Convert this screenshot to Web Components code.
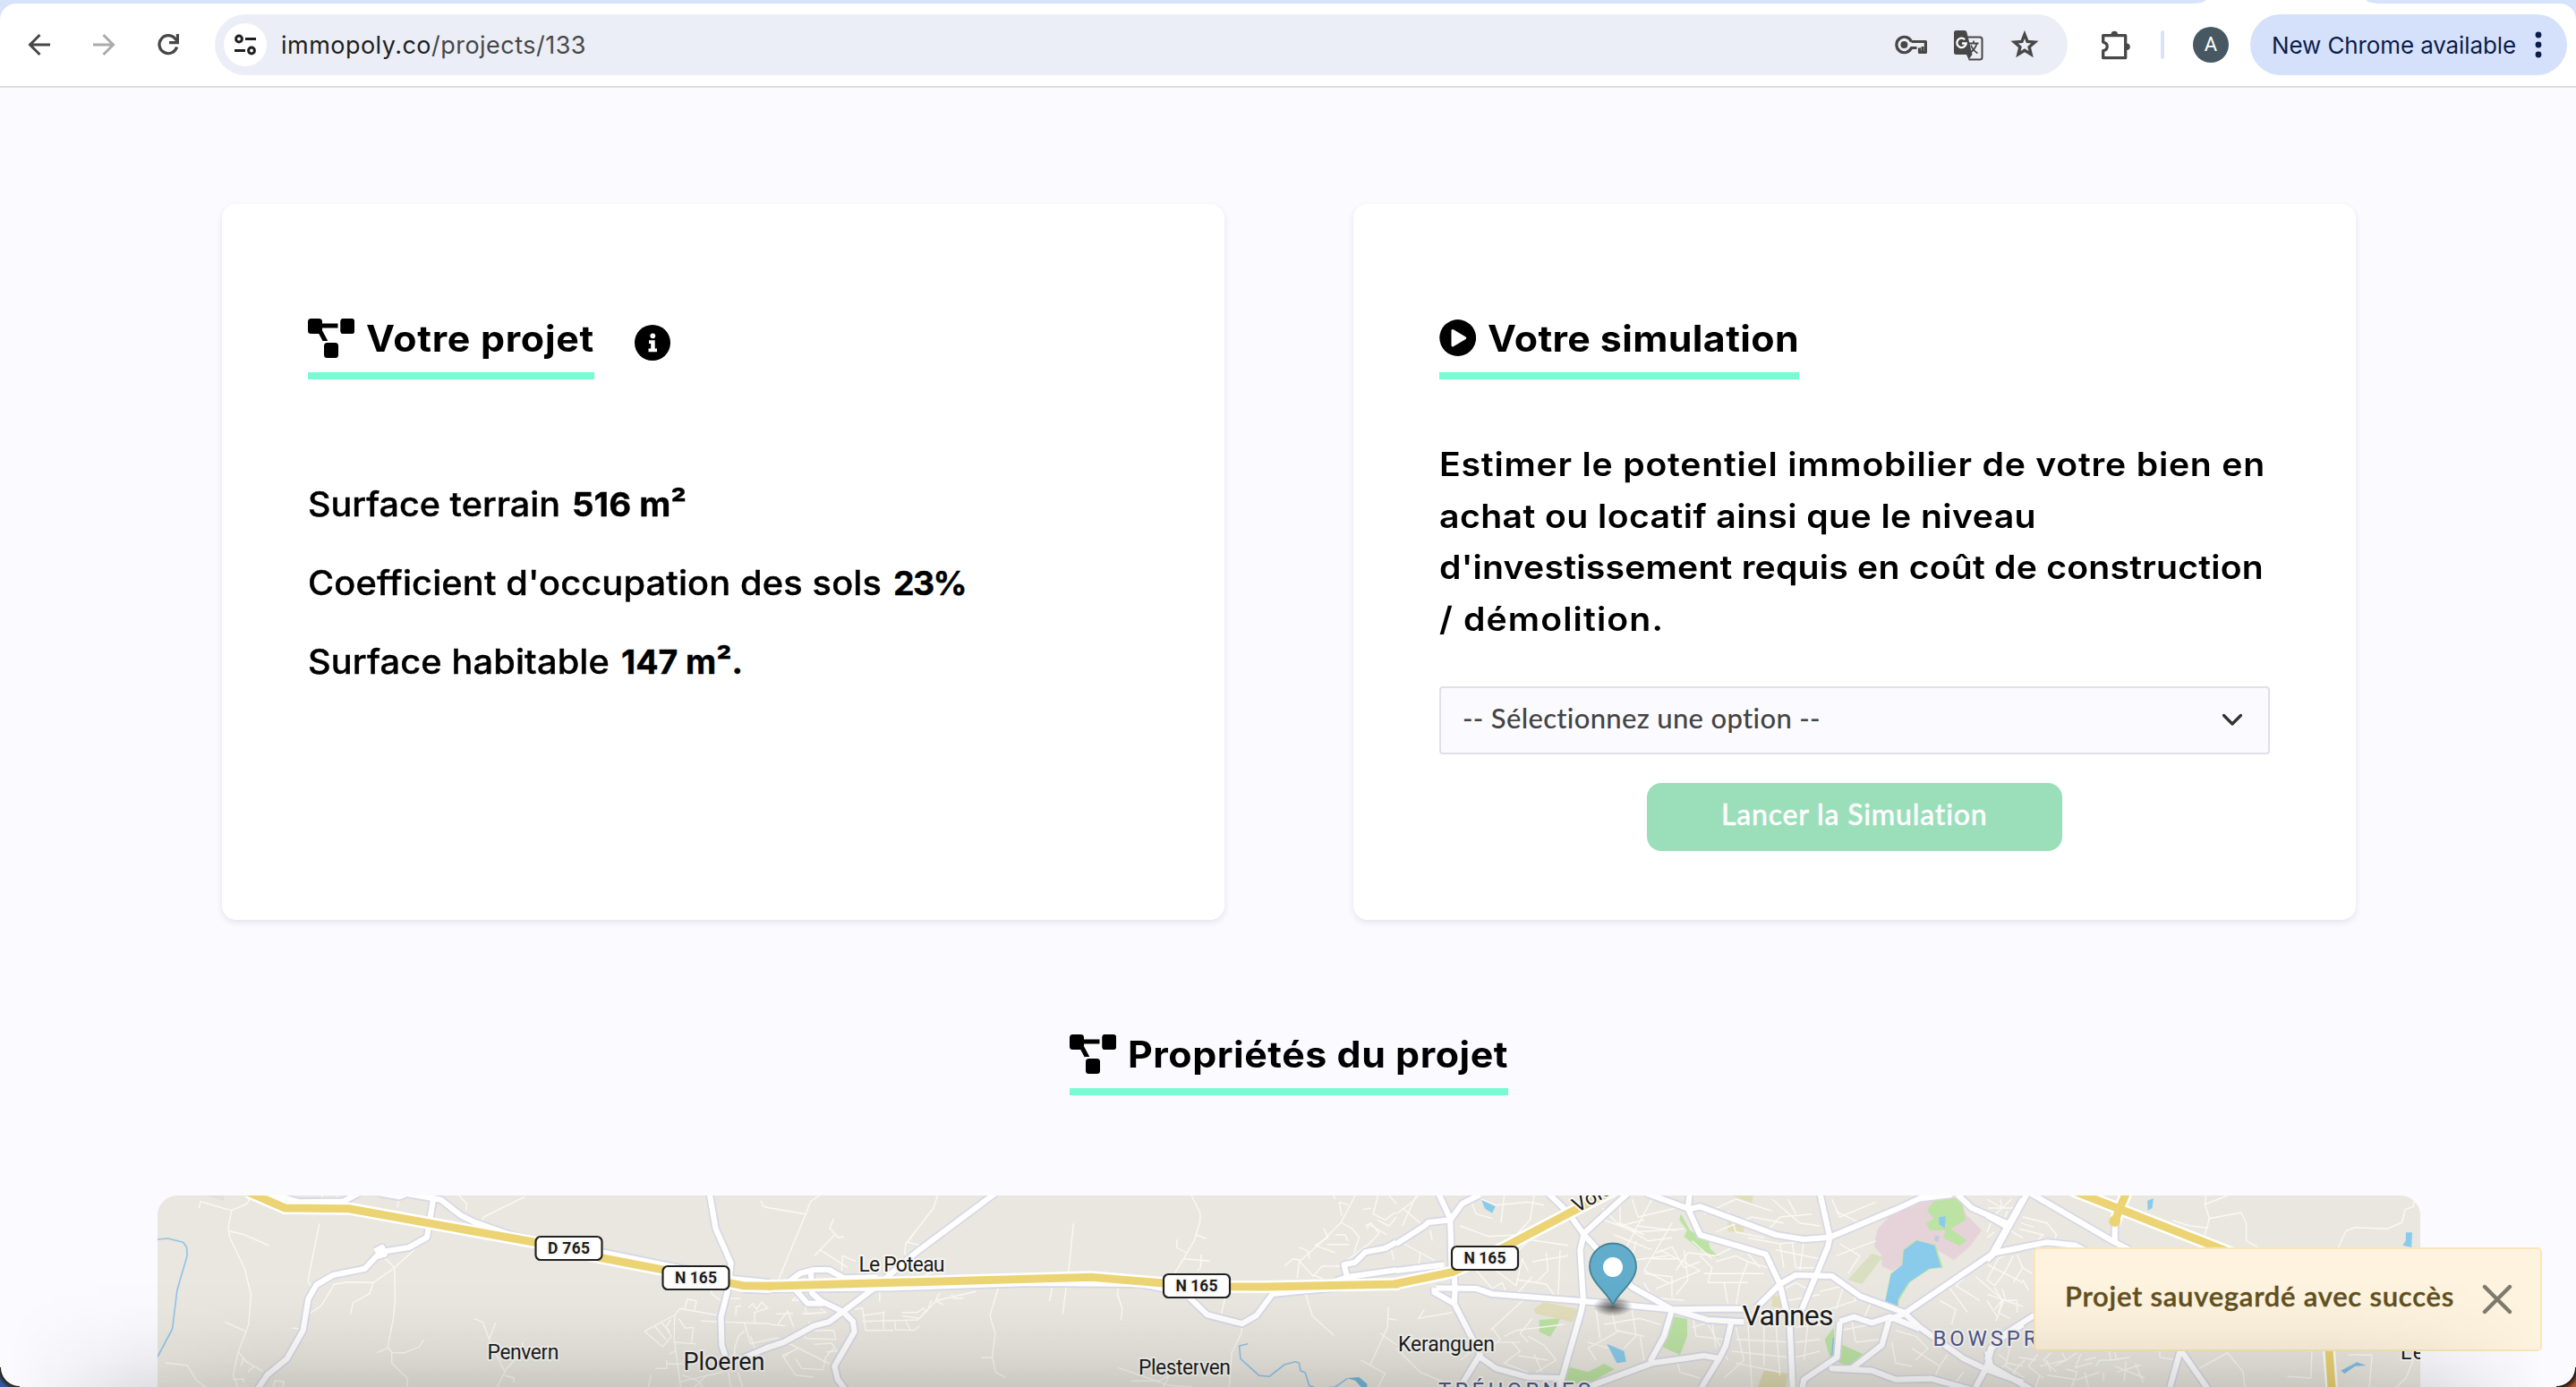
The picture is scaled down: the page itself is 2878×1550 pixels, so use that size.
<!DOCTYPE html>
<html lang="fr">
<head>
<meta charset="utf-8">
<title>Immopoly</title>
<style>
html,body{margin:0;height:100%;overflow:hidden;background:#fbfaff;font-family:Inter,"Open Sans",sans-serif;color:#000}
</style>
</head>
<body>
<app-window>
  <browser-bar slot="bar"></browser-bar>
  <project-card slot="card">
    <title-row slot="title">
      <section-title icon="diagram" w="255">Votre projet</section-title>
      <info-dot></info-dot>
    </title-row>
    <fact-list>
      <fact-line><fit-text w="282">Surface terrain</fit-text><fit-text bold w="128">516 m²</fit-text></fact-line>
      <fact-line><fit-text w="641">Coefficient d'occupation des sols</fit-text><fit-text bold w="81">23%</fit-text></fact-line>
      <fact-line><fit-text w="337">Surface habitable</fit-text><fit-text bold w="136">147 m².</fit-text></fact-line>
    </fact-list>
  </project-card>
  <project-card slot="card">
    <section-title slot="title" icon="play" w="348">Votre simulation</section-title>
    <simulation-form></simulation-form>
  </project-card>
  <section-title slot="heading" icon="diagram" w="425">Propriétés du projet</section-title>
  <city-map slot="map"></city-map>
  <toast-message slot="toast"><fit-text w="435">Projet sauvegardé avec succès</fit-text></toast-message>
</app-window>

<script>
const define = (name, html, after) => customElements.define(name, class extends HTMLElement {
  connectedCallback() {
    if (this.shadowRoot) return;
    this.attachShadow({mode: 'open'}).innerHTML = typeof html === 'function' ? html(this) : html;
    if (after) after(this);
  }
});

define('app-window', `<style>
:host{display:flex;flex-direction:column;height:1550px;position:relative;overflow:hidden;background:#fbfaff}
main{display:flex;flex-direction:column;align-items:center;flex:1;padding-top:130px;width:2880px}
.cards{display:flex;gap:144px}
.head{display:flex;margin-top:128px;margin-bottom:112px}
.toast{position:absolute;right:38px;top:1394px}
.shade{position:absolute;left:0;right:0;bottom:0;height:120px;pointer-events:none;background:linear-gradient(to top,rgba(20,20,15,.145),rgba(20,20,15,.08) 25%,rgba(20,20,15,.03) 55%,rgba(20,20,15,.008) 80%,transparent);-webkit-mask-image:linear-gradient(to right,transparent 10px,rgba(0,0,0,.7) 150px,#000 300px,#000 2600px,rgba(0,0,0,.7) 2720px,transparent 2840px)}
.corner{position:absolute;bottom:0;width:22px;height:22px}
.l{left:0;background:radial-gradient(circle at 22px 0,transparent 20.5px,#2c2213 21.5px,#2f5aa0 27px)}
.r{right:0;background:radial-gradient(circle at 0 0,transparent 20.5px,#1c1512 21.5px,#b4552f 28px)}
</style>
<slot name="bar"></slot>
<main><div class="cards"><slot name="card"></slot></div><div class="head"><slot name="heading"></slot></div><slot name="map"></slot></main>
<div class="toast"><slot name="toast"></slot></div><div class="shade"></div><div class="corner l"></div><div class="corner r"></div>`);

define('browser-bar', `<style>
:host{display:block;height:98px;box-sizing:border-box;background:#d7e2fb;border-bottom:2px solid #dcdcdf;font-family:Inter,sans-serif}
.tabs{height:4px;display:flex;justify-content:space-between;background:#fff}
.tabs i{display:block;background:#d7e2fb}
.tabs i:first-child{width:2464px;border-bottom-right-radius:16px 4px}
.tabs i:last-child{width:234px;border-bottom-left-radius:16px 4px}
.row{display:flex;align-items:center;height:92px;background:#fff;border-radius:18px 18px 0 0;box-sizing:border-box;padding:0 10px 0 28px}
svg{display:block;flex:none}
.omni{display:flex;align-items:center;box-sizing:border-box;width:2070px;height:68px;border-radius:34px;background:#ebeef6;margin-left:36px;padding:0 30px 0 10px}
.tune{width:48px;height:48px;border-radius:50%;background:#fff;margin-right:16px}
.url{font-size:27px;color:#1f1f1f;flex:1;display:flex}
.url fit-text+fit-text{color:#474747}
.sep{width:4px;height:32px;border-radius:2px;background:#d7e2fb;margin:0 32px}
.av{width:40px;height:40px;border-radius:50%;background:#475862;color:#fff;font:22px/40px Roboto,sans-serif;text-align:center;margin-right:24px;flex:none}
.upd{display:flex;align-items:center;box-sizing:border-box;width:354px;height:68px;border-radius:34px;background:#d5e1fb;padding-left:24px;color:#0b1d4b;font-size:26px;flex:none}
</style>
<div class="tabs"><i></i><i></i></div>
<div class="row">
<svg width="32" height="32" fill="none" stroke="#474747" stroke-width="3"><path d="M28 16H6M16.5 5 5.5 16l11 11"/></svg>
<svg width="32" height="32" style="margin-left:40px" fill="none" stroke="#ababab" stroke-width="3"><path d="M4 16h22M15.500 5l11 11-11 11"/></svg>
<svg width="32" height="32" style="margin-left:40px" fill="none" stroke="#474747" stroke-width="3.200"><path d="M25.600 18.500A10 10 0 1 1 23.700 9.300L26 12"/><path d="M26.400 4v9.600H17"/></svg>
<div class="omni">
 <div class="tune"><svg width="48" height="48" fill="none" stroke="#1f1f1f" stroke-width="3"><circle cx="17" cy="17.500" r="3.400"/><path d="M24 17.500h12M12 30.500h12"/><circle cx="31" cy="30.500" r="3.400"/></svg></div>
 <div class="url"><fit-text w="168">immopoly.co</fit-text><fit-text w="173">/projects/133</fit-text></div>
 <svg width="38" height="34" fill="none" stroke="#474747" stroke-width="3.200"><path d="M19.500 13.500A8.700 8.700 0 1 0 19.500 20.500H25.500M19.500 13.500H35.400V25.400H28.500V20.500" stroke-linejoin="round"/><path d="M32 19v5"/><circle cx="11.400" cy="17" r="4" fill="#474747" stroke="none"/></svg>
 <svg width="34" height="36" style="margin-left:28px"><path d="M15 9.500h15a2.500 2.500 0 0 1 2.500 2.500v20a2.500 2.500 0 0 1-2.500 2.500H17.500" fill="none" stroke="#474747" stroke-width="2"/><path d="M3.500 2h9.500a2.500 2.500 0 0 1 2.300 1.700L21.500 29l-4 5.500L15 29H3.500A2.500 2.500 0 0 1 1 26.500v-22A2.500 2.500 0 0 1 3.500 2z" fill="#474747"/><path d="M13.200 12.200a5.200 5.200 0 1 0 1.500 4.300H10" fill="none" stroke="#fff" stroke-width="2.300"/><path d="M17.500 16.500h11M23 13.500v3M26.500 16.500c-1 5-4 8-8 11M20 18.500c1.500 4 4 7 7.500 9" fill="none" stroke="#474747" stroke-width="1.800"/></svg>
 <svg width="36" height="36" style="margin-left:28px"><path fill="none" stroke="#474747" stroke-width="3.400" d="M18 6.500l3.100 7.900 8.300.7-6.300 5.400 2 8.100L18 24.200l-7.100 4.400 2-8.100-6.300-5.400 8.300-.7z"/></svg>
</div>
<svg width="36" height="36" style="margin-left:36px" fill="none" stroke="#474747" stroke-width="3.300" stroke-linejoin="round"><path d="M3.700 7.700h25v25h-25v-8q4.500-1 4.500-4.800t-4.500-4.800z"/><path d="M12.500 6.500a3.800 3.800 0 0 1 7.600 0zM30 16.500a3.800 3.800 0 0 1 0 7.600z" fill="#474747" stroke="none"/></svg>
<div class="sep"></div><div class="av">A</div>
<div class="upd"><fit-text w="273">New Chrome available</fit-text><svg width="12" height="40" style="margin-left:19px" fill="#0b1d4b"><circle cx="6" cy="9" r="3.400"/><circle cx="6" cy="20" r="3.400"/><circle cx="6" cy="31" r="3.400"/></svg></div>
</div>`);

define('project-card', `<style>
:host{display:flex;flex-direction:column;align-items:flex-start;box-sizing:border-box;width:1120px;height:800px;padding:128px 96px 0;background:#fff;border-radius:16px;box-shadow:0 3px 7px rgba(60,50,90,.11)}
</style><slot name="title"></slot><slot></slot>`);

define('title-row', `<style>:host{display:flex;align-items:flex-start;gap:45px}</style><slot></slot>`);

const icons = {
  diagram: `<svg width="52" height="44" style="margin-right:13px"><path d="M15 8h24M13 13l8 15" fill="none" stroke="#000" stroke-width="5"/><rect y="0" width="16" height="17" rx="3.500"/><rect x="36" width="16" height="17" rx="3.500"/><path d="M35 0v17" stroke="var(--gap,#fff)" stroke-width="3"/><rect x="36.500" width="15.500" height="17" rx="3.500"/><rect x="16.500" y="25" width="19" height="6" fill="var(--gap,#fff)"/><rect x="18" y="27" width="16" height="17" rx="3.500"/></svg>`,
  play: `<svg width="41" height="44" style="margin-right:13px"><circle cx="20.700" cy="21.500" r="20.400"/><path d="M13.500 13.500V30q.3 2 2.300 1.200l13.800-8.300q1.500-1.200 0-2.400L15.800 12.200q-2-.7-2.300 1.300z" fill="#fff"/></svg>`
};
define('section-title', el => `<style>
:host{display:inline-flex;align-items:flex-start;height:60px;padding-top:1px;box-sizing:content-box;border-bottom:8px solid #76fbd3;font-size:40.500px;font-weight:700;line-height:46px;margin-top:-1px}
svg{display:block;flex:none}
</style>${icons[el.getAttribute('icon')]}<fit-text stretch w="${el.getAttribute('w')}"><slot></slot></fit-text>`);

define('info-dot', `<style>:host{display:block;width:40px;height:40px;margin-top:7px}</style>
<svg width="40" height="40"><circle cx="20" cy="20" r="20"/><g fill="#fff"><circle cx="20.300" cy="12.300" r="2.900"/><path d="M16 17.200h6.700v9.300H25v3.700H15.500v-3.700h2.700v-5.600H16z"/></g></svg>`);

define('fact-list', `<style>:host{display:flex;flex-direction:column;gap:30px;margin-top:111px}</style><slot></slot>`);
define('fact-line', `<style>:host{display:flex;gap:13px;font-size:37.500px;font-weight:500;line-height:58px;-webkit-text-stroke:.4px #000}::slotted([bold]){font-weight:700}</style><slot></slot>`);

define('simulation-form', `<style>
:host{display:flex;flex-direction:column;align-items:center;width:928px}
p{margin:66px 0 47px;width:100%;display:flex;flex-direction:column;font-size:37px;font-weight:600;line-height:57.500px}
.sel{display:flex;align-items:center;justify-content:space-between;box-sizing:border-box;width:928px;height:76px;padding:0 27px 0 24px;border:2px solid #dfe0e8;border-radius:4px;background:#fbfaff;color:#444;font:500 31px Lato,sans-serif}
.sel fit-text{margin-bottom:7px}
.btn{display:flex;align-items:center;justify-content:center;box-sizing:border-box;width:464px;height:76px;margin-top:32px;padding-bottom:8px;border-radius:16px;background:#9bdeba;color:#fff;font:500 32px Lato,sans-serif;-webkit-text-stroke:.4px #fff}
</style>
<p><fit-text stretch w="923">Estimer le potentiel immobilier de votre bien en</fit-text><fit-text stretch w="667">achat ou locatif ainsi que le niveau</fit-text><fit-text stretch w="921">d'investissement requis en coût de construction</fit-text><fit-text stretch w="251">/ démolition.</fit-text></p>
<div class="sel"><fit-text w="401">-- Sélectionnez une option --</fit-text><svg width="26" height="20" fill="none" stroke="#333" stroke-width="3.200" stroke-linecap="round" stroke-linejoin="round"><path d="M3.500 4.500l9.500 9.500 9.500-9.500"/></svg></div>
<div class="btn"><fit-text w="298">Lancer la Simulation</fit-text></div>`);

define('toast-message', `<style>
:host{display:flex;align-items:center;justify-content:space-between;box-sizing:border-box;width:568px;height:116px;padding:0 30px 0 33px;border:2px solid #fce6b9;border-radius:5px;background:#fdf3de;color:#62501f;font:600 31px Lato,sans-serif;-webkit-text-stroke:.4px #62501f}
::slotted(fit-text){margin-bottom:9px}
</style><slot></slot><svg width="36" height="36" fill="none" stroke="#7e7a6c" stroke-width="4.400" stroke-linecap="round"><path d="M4 4l28 28M32 4L4 32"/></svg>`);

/* Map geometry: each tile keeps its own coordinate system [origin x, x scale]; y is shared (thirds of a pixel). */
const tiles = {A: [-16, 2.24], B: [684, 2.24], C: [1384, 2.24], D: [2044, 2.383]};
const pts = (t, s) => s.trim().split(/\s+/).map(p => {
  const [x, y] = p.split(',').map(Number);
  return (tiles[t][0] + x / tiles[t][1]).toFixed(1) + ',' + (y / 3 - 16).toFixed(1);
}).join(' ');
const minor = {
A: `143,68 221,98 260,75 270,50|143,68 140,90|221,98 213,155 217,190 254,293 270,380 264,480 238,572 225,650 240,700|217,168 250,178 315,216|441,142 412,335 420,352|205,472 256,503|372,492 392,496|680,228 629,290 603,255|629,290 630,400 626,460 612,555 622,575 622,610 661,660 661,700|629,290 576,340 510,338 478,346 445,418 418,442|576,340 566,377 525,408 519,445|584,575 612,560|622,575 655,575 690,556 702,532|55,609 110,617 135,670 158,692|238,572 258,605 300,637|245,620 250,595|262,640 278,620|225,664 252,664 250,675|325,690 330,668 353,672 345,700|828,460 850,473 866,530 905,640 885,690|882,474 866,530|950,540 948,575 905,635|905,652 928,660 927,675|790,48 809,75 808,98|955,52 852,120 845,138|448,48 448,65|486,48 484,62|640,60 636,88|1545,65 1552,85 1568,90|1421,365 1423,378 1450,405|1354,432 1362,395 1384,402 1380,432|1343,427 1440,450|1343,427 1330,450 1328,540|1328,450 1255,503 1300,555 1322,520 1308,490 1320,465|1340,460 1357,493 1377,490 1372,545|1280,485 1308,530|1295,470 1318,505|1395,469 1568,478|1328,540 1383,545|1483,450 1484,420 1497,418|1515,425 1525,410 1535,430 1548,405 1562,425|1530,475 1530,440 1565,425|1505,478 1520,545 1568,530|1505,500 1490,520 1480,560 1480,600|1330,540 1345,690|1316,580 1335,567|1310,613 1350,613|1282,628 1310,628 1310,600|1271,650 1265,690|1345,672 1450,640|1380,690 1410,650|1465,640 1470,690|1520,520 1530,560 1568,550|1468,393 1495,393|1488,640 1500,690|1350,650 1390,670 1400,690`,
B: `0,90 90,110 22,330|90,110 102,68 125,48|160,126 150,158 172,190 186,186|162,180 112,250|126,230 195,290|180,300 182,250 215,268|420,48 410,90 340,210 338,240 345,262|365,168 345,205 380,216|440,290 385,318|760,142 748,303|572,358 551,450 564,510 557,590 565,640 590,658|530,591 557,592|742,352 733,447|707,354 700,402|873,352 870,378 882,428 879,466|1055,48 1077,105 1077,135 1062,200 1040,250 1013,310|1067,180 1092,192|1020,195 1018,222 1042,240|1036,260 1102,268|1080,245 1078,290 1070,300|1182,485 1180,510 1156,575 1150,690|1140,390 1130,445|1322,370 1342,382 1358,452 1412,517|1548,422 1546,490 1502,618|1528,510 1568,548|1480,600 1540,645 1522,690|1546,460 1568,465|872,625 1000,685 1060,690|1000,650 985,690|905,670 975,670 1030,625|1465,48 1430,138 1380,205 1325,270 1320,325|1410,48 1415,60|1430,138 1458,160 1475,188 1462,240|1448,80 1425,70 1432,115|1385,158 1398,188 1365,215 1415,240|1415,180 1440,180 1447,200|1395,212 1450,212|1522,48 1510,110 1540,130 1565,105|1485,95 1505,90|1490,150 1505,140 1525,175 1500,210 1440,270|1550,48 1568,75|1495,160 1500,145 1545,180|1520,130 1550,150 1568,120|1288,285 1310,260 1328,265|1325,222 1345,232 1352,260|1325,268 1360,318 1382,285 1432,285|1362,315 1385,328|1556,230 1562,265|232,470 370,465 418,400 516,370|213,430 232,425 240,500 310,500|285,435 285,500|313,470 315,498 362,500 375,485|330,440 370,440 385,425 390,435 375,460 332,452|340,468 352,498|232,450 288,440|405,400 392,440|425,375 415,400 435,415|455,378 460,392 485,392|250,370 275,370 275,405|55,400 72,400 68,385 55,400|88,415 92,445 130,442|80,445 140,440 120,418|15,445 58,443|20,480 45,435 60,490|0,480 40,485|0,530 22,525|32,550 58,520|42,540 150,612|72,560 32,585 65,650 110,657|65,595 80,628 133,632 140,590 160,560|78,500 160,500 165,530 90,527 80,490|112,547 155,543 168,570 142,572|98,470 105,500|36,590 55,570`,
C: `15,150 50,48|15,90 60,140|0,110 40,70 55,48|190,48 250,80 330,70 370,80|160,150 230,185 300,180 335,130 345,48|185,60 200,110 240,125|270,48 262,140|20,210 60,240 55,290|60,240 95,265|85,165 90,200|300,190 430,215|330,200 300,240 260,270|385,130 330,180|250,300 300,350 315,260 330,300|300,330 375,345 400,390|200,300 240,360 265,340 280,390|375,240 380,300 350,340|410,230 405,390|340,270 430,250|300,380 340,320|235,500 320,395|70,430 55,460 140,440|160,600 220,540 310,540|270,520 300,500 420,480|240,490 260,530 235,560|290,540 310,570 270,610 330,640|330,520 370,550 400,600 350,640|305,585 380,600|0,560 60,640 130,680|30,520 80,560|340,460 310,510 330,540|345,580 365,640|500,120 600,170 720,160|515,90 560,150 620,130|590,60 605,120 700,90|560,60 560,140 620,180|640,60 560,260|600,150 700,165|555,140 630,200 690,190|545,180 640,230|600,200 580,310|650,240 690,220 720,290 760,270|560,270 680,250|690,140 620,300 680,340|660,230 760,300 650,360|700,300 730,240 800,250|620,310 690,320 690,390|720,230 730,330 700,380|760,250 790,290 780,340 880,340|800,270 850,250 880,270 860,340|770,310 920,310|800,250 860,210 910,290|820,340 830,410|860,340 850,420|880,270 930,290|620,340 640,390 720,400|740,200 790,260|700,260 640,260|770,110 850,60 940,100|830,100 850,170 920,190|800,170 890,120 970,140|920,180 960,120 1040,110|940,60 1010,140 1060,150|980,60 1000,110|880,190 960,210 1030,200|960,210 970,290|950,230 1060,260|990,200 1000,290 1060,290|1020,200 1010,300|1090,60 1110,120 1200,70|1100,100 1160,140 1150,160|1110,210 1160,250 1130,310|1100,250 1200,200|1060,370 1120,350 1100,430|1130,350 1150,400 1080,430|1190,400 1170,460|960,370 1000,340 1040,370|980,400 1060,380|500,430 510,530|540,440 550,500 620,520|590,430 600,520 570,560|520,480 610,460 660,480|560,500 480,560 500,600|610,520 620,600|480,540 530,560|740,430 750,520 820,530|700,590 710,640 760,660|740,490 790,470 800,560|760,430 830,600|850,490 870,600 820,660|880,480 890,690|850,530 990,540|840,570 980,590|920,480 920,620|950,480 960,650|850,610 960,640|1000,490 1080,480|1000,540 1060,530|1000,590 1060,570|1030,480 1020,600|1110,500 1190,480|1140,470 1150,540 1210,530|1250,500 1300,520 1330,560 1300,600|1240,540 1250,610 1290,620|1290,560 1360,620 1350,650|1380,580 1360,620|1420,640 1390,690|1440,300 1400,350 1460,400|1380,350 1430,440|1480,280 1568,340|1450,320 1520,400 1500,470|1360,400 1400,430 1390,480|1480,380 1568,420|1500,640 1530,610 1568,620|1480,90 1568,90|1500,110 1540,60|1530,160 1568,190|1530,100 1520,130`,
D: `95,120 160,140 185,180 180,195|85,160 150,180 120,215|90,140 125,155|0,60 40,90 35,60|10,140 0,170|20,170 0,190|60,240 30,260 0,330 20,350 45,310 70,250|80,245 95,290 120,310|95,290 70,340|20,355 40,400 30,440 60,460|40,360 50,400 80,400 80,440|40,400 20,430|95,330 110,365|0,400 30,460|583,48 580,78 592,125 676,105 690,140 690,200 720,220|592,125 578,190|495,132 540,150 588,157|580,78 640,48|1138,62 1135,85 1113,95 1105,138 1065,160 980,155 955,168 935,222|865,570 862,660 800,655|565,628 640,575 682,640 686,690|962,582 1025,583 1018,690|1135,600 1115,660 1090,690|460,570 460,590 495,598|135,580 110,620 150,660|170,575 150,600 185,640|200,575 210,600 180,620|85,590 130,600|60,560 50,620 100,660|140,620 210,600 240,575|250,580 235,625 280,610|210,630 240,640 225,690|260,600 290,590|160,650 240,665 300,640|290,620 300,600 330,600 325,570|340,575 345,600|340,620 420,660|345,640 410,615|370,605 365,670|395,610 415,675|310,640 310,670|330,600 380,590|260,640 270,690|160,600 170,640|100,600 70,640 90,690|50,600 30,580|130,690 140,650`
};
const major = {
A: `310,40 390,70 500,68 540,40|590,40 640,52 660,42 745,62 795,115 830,138 930,185 1100,225 1320,285 1480,328 1568,340|727,50 710,188 665,222 593,238 555,293 475,315 433,348 413,395 400,500 360,595 310,650 285,700|580,235 598,222 604,245 585,252|1417,40 1433,160 1471,275 1462,370 1446,455 1448,550 1460,600|1488,600 1568,555|1500,362 1568,366`,
B: `565,40 365,240 290,325|260,360 183,437 148,472 110,485 35,540 -10,560|183,437 208,470 212,505 162,620 170,665 190,700|183,437 130,403 105,375 103,300|50,335 75,310 110,297 148,297 185,325 270,322|65,365 95,410 135,410|0,362 300,358 650,342 930,345 985,360|1050,390 1095,448 1182,478 1218,450 1258,378 1330,368 1568,340|1415,335 1450,320 1568,298|1445,320 1437,280 1465,272 1490,238 1540,225 1568,205`,
C: `0,210 70,150 80,138 135,130 165,75 210,45|105,40 135,125|135,130 138,290|0,300 120,280|145,310 147,365 145,410|100,358 200,360 240,378 465,402 690,430 790,428 870,428|95,358 95,372 145,410 210,580 160,690|210,590 250,628 330,657 410,660|380,40 430,105 470,180 590,355 690,430 780,465 870,472|580,40 470,175 460,230 468,400 462,440 408,690|625,40 730,92 760,180 925,245 960,345|735,30 730,90|730,95 760,85 950,180 1020,195 1085,188 1250,95 1310,58 1390,45|1060,40 1085,188 1080,220 1015,430|900,425 960,345 1000,315 1090,318 1160,385 1270,440 1310,490 1420,595 1475,630 1568,675|1568,60 1490,245 1270,445 1230,465|960,345 985,490 992,700|1110,470 1145,455 1190,475 1235,455 1310,495|1110,470 1103,590 1020,665 1015,700|1232,470 1215,550 1140,628 1090,628 1190,635 1250,665 1340,662 1440,700|690,430 670,520 635,605|838,475 825,550 810,590 760,700|480,690 640,610 770,585 810,595|1475,635 1490,560 1520,520 1568,480|1475,630 1450,690|1405,45 1440,90 1535,145|1500,240 1568,222`,
D: `105,45 20,240 0,265|0,115 50,150|20,240 160,205 235,215 265,235|115,40 340,205 380,230|340,140 340,210|0,570 10,620 120,700|0,600 10,560 50,510 125,450|485,700 515,565 590,700`
};
const yellow = {
A: `262,36 355,90 515,92 980,205 1150,258 1320,302 1500,350 1575,352`,
B: `-5,352 805,322 985,342 1150,353 1240,354 1575,345`,
C: `-5,345 140,305 230,250 435,105 560,20`,
D: `225,30 660,245|372,36 350,100 340,140|910,560 918,700`
};
const areas = [
 ['C','#e6d3da','1205,160 1250,95 1310,65 1410,52 1425,110 1465,165 1435,220 1395,265 1340,220 1270,280 1240,300 1215,285 1215,250 1195,215'],
 ['C','#bde3a4','1345,65 1380,50 1415,65 1425,130 1388,160 1428,198 1410,218 1368,190 1375,165 1335,165 1325,140 1345,125 1328,100'],
 ['C','#bde3a4','712,108 735,165 782,200 785,225 810,258 760,230 720,185 728,165 708,130'],
 ['C','#bde3a4','690,452 728,462 728,520 710,582 665,555'],
 ['C','#bde3a4','358,465 410,460 400,490 385,522 358,505'],
 ['C','#bde3a4','425,620 480,640 520,612 546,630 480,680 420,675'],
 ['C','#bde3a4','1110,545 1168,580 1130,620 1095,600'],['C','#bde3a4','1095,490 1072,530 1085,590 1098,590'],
 ['C','#e3deba','370,405 455,430 440,472 350,445 343,430'],['C','#e3deba','940,380 965,390 965,425 940,420'],
 ['C','#e3deba','830,125 870,140 870,172 830,168'],['C','#e3deba','840,48 893,48 890,75'],['C','#d9dfc0','1190,242 1217,255 1165,345 1130,330'],
 ['C','#dfd9b0','920,635 980,645 975,690 905,690'],
 ['C','#bde3a4','1300,197 1350,213 1368,290 1335,295 1285,340 1258,400 1255,430 1222,410 1237,310 1265,282 1268,230'],
 ['C','#8acbec','1303,199 1347,215 1363,288 1333,293 1282,340 1255,395 1255,425 1223,408 1238,312 1267,280 1270,232'],
 ['C','#8acbec','213,62 248,85 240,107 222,92'],['C','#8acbec','527,545 570,570 575,605 552,610'],['C','#8acbec','1358,120 1375,118 1373,158 1358,145'],
 ['C','#c4c9db','1348,182 1360,185 1355,203 1346,198'],
 ['B','#76b6da','1443,660 1475,657 1495,680 1495,700 1480,690 1465,668'],
 ['D','#8acbec','427,65 443,58 440,90 428,98'],['D','#8acbec','1115,172 1132,172 1130,222 1107,215 1115,198'],
 ['D','#7fc0e6','942,635 985,607 1010,618 980,620 952,645'],
 ['A','#e2e0d9','155,48 202,48 202,66']
];
const rivers = [['A','20,197 62,192 100,205 109,222 110,250 85,365 73,495 36,588'],['B','1197,545 1175,552 1178,595 1225,652 1250,655 1288,615 1315,605 1325,610 1328,635 1340,642 1350,685 1370,695 1415,690 1445,662'],['C','1094,525 1090,590'],['C','1042,642 1085,600']];
const lines = (set, style) => Object.entries(set).map(([t, s]) => s.split('|').map(l => `<polyline points="${pts(t, l)}" ${style}/>`).join('')).join('');
const label = (x, y, w, size, s, extra = '') => `<text x="${x - 176}" y="${y - 1336}" textLength="${w}" font-size="${size}" ${extra}>${s}</text>`;
const shield = (x, y, s) => `<g transform="translate(${x - 176} ${y - 1336})"><rect x="1" y="1" width="74" height="26" rx="5.500" fill="#fff" stroke="#222" stroke-width="2.200"/><text x="14.500" y="20" textLength="47" font-size="17.500" font-weight="700" stroke="none">${s}</text></g>`;

define('city-map', () => `<style>
:host{display:block;width:2528px;height:214px;border-radius:22px 22px 0 0;overflow:hidden;background:#e9e7df}
svg{display:block}
polyline{fill:none;stroke-linejoin:round}
text{font-family:Roboto,sans-serif;fill:#1c1c1c;stroke:#f7f6f2;stroke-width:4px;paint-order:stroke;stroke-linejoin:round}
text.area{fill:#50588a}
</style>
<svg width="2528" height="214" viewBox="0 0 2528 214">
${areas.map(([t, c, s]) => `<polygon fill="${c}" points="${pts(t, s)}"/>`).join('')}
${rivers.map(([t, s]) => `<polyline points="${pts(t, s)}" stroke="#8fc3ea" stroke-width="1.600"/>`).join('')}
${lines(minor, 'stroke="#faf9f6" stroke-width="1.400"')}
${lines(major, 'stroke="#d6d7e6" stroke-width="9.500"')}
${lines(major, 'stroke="#fff" stroke-width="6.200"')}
${lines(yellow, 'stroke="#fff" stroke-width="14"')}
${lines(yellow, 'stroke="#ecd474" stroke-width="9"')}
<circle cx="${2044 + 340 / 2.383}" cy="28.500" r="6.500" fill="#ecd474"/>
${shield(597.5, 1381, 'D 765')}${shield(739.5, 1414, 'N 165')}${shield(1299, 1423, 'N 165')}${shield(1621, 1392, 'N 165')}
${label(959.5, 1420.500, 96, 23, 'Le Poteau')}
${label(544.5, 1519, 80, 23, 'Penvern')}
${label(763.5, 1530.500, 91, 27, 'Ploeren')}
${label(1272, 1536, 103, 23, 'Plesterven')}
${label(1562, 1510, 108, 23, 'Keranguen')}
${label(1946.500, 1480.500, 102, 32, 'Vannes')}
${label(2159.500, 1504, 116, 24, 'BOWSPR', 'class="area"')}
${label(1607, 1562, 170, 24, 'TRÉHORNES', 'class="area"')}
${label(2682, 1519, 26, 23, 'Le')}
<text font-size="23" textLength="46" transform="translate(1586 19.500) rotate(-29)">Voie</text>
<defs><radialGradient id="sh"><stop offset="0" stop-opacity=".6"/><stop offset=".5" stop-opacity=".35"/><stop offset="1" stop-opacity="0"/></radialGradient></defs>
<ellipse cx="1626" cy="124" rx="22" ry="11" fill="url(#sh)"/>
<path d="M1626 122.500C1622 110 1600 97 1600 79.500a26 26 0 0 1 52 0C1652 97 1630 110 1626 122.500z" fill="#61adcb" stroke="#458398" stroke-width="1.800"/>
<circle cx="1626" cy="80" r="11" fill="#fff"/>
</svg>`);

/* Makes a run of text fill the width given in its w attribute: glyphs widen by up to 6%, letter-spacing takes the rest. */
define('fit-text', `<style>:host{display:inline-block;white-space:nowrap}span{display:inline-block;white-space:nowrap;transform-origin:0 50%}</style><span><slot></slot></span>`, el => {
  const span = el.shadowRoot.querySelector('span');
  const slot = el.querySelector('slot');
  const text = (slot ? slot.assignedNodes().map(n => n.textContent).join('') : el.textContent).trim();
  const w = +el.getAttribute('w');
  const now = span.getBoundingClientRect().width;
  if (!now || !text) return;
  const wide = el.hasAttribute('stretch') || el.parentNode.localName === 'fact-line';
  const k = wide ? Math.max(1, Math.min(1.06, w / now)) : 1;
  el.style.letterSpacing = ((w / k - now) / text.length).toFixed(3) + 'px';
  if (k > 1) span.style.transform = `scaleX(${k})`;
  el.style.width = w + 'px';
});
document.querySelector('[slot=heading]').style.setProperty('--gap', '#fbfaff');
</script>
</body>
</html>
